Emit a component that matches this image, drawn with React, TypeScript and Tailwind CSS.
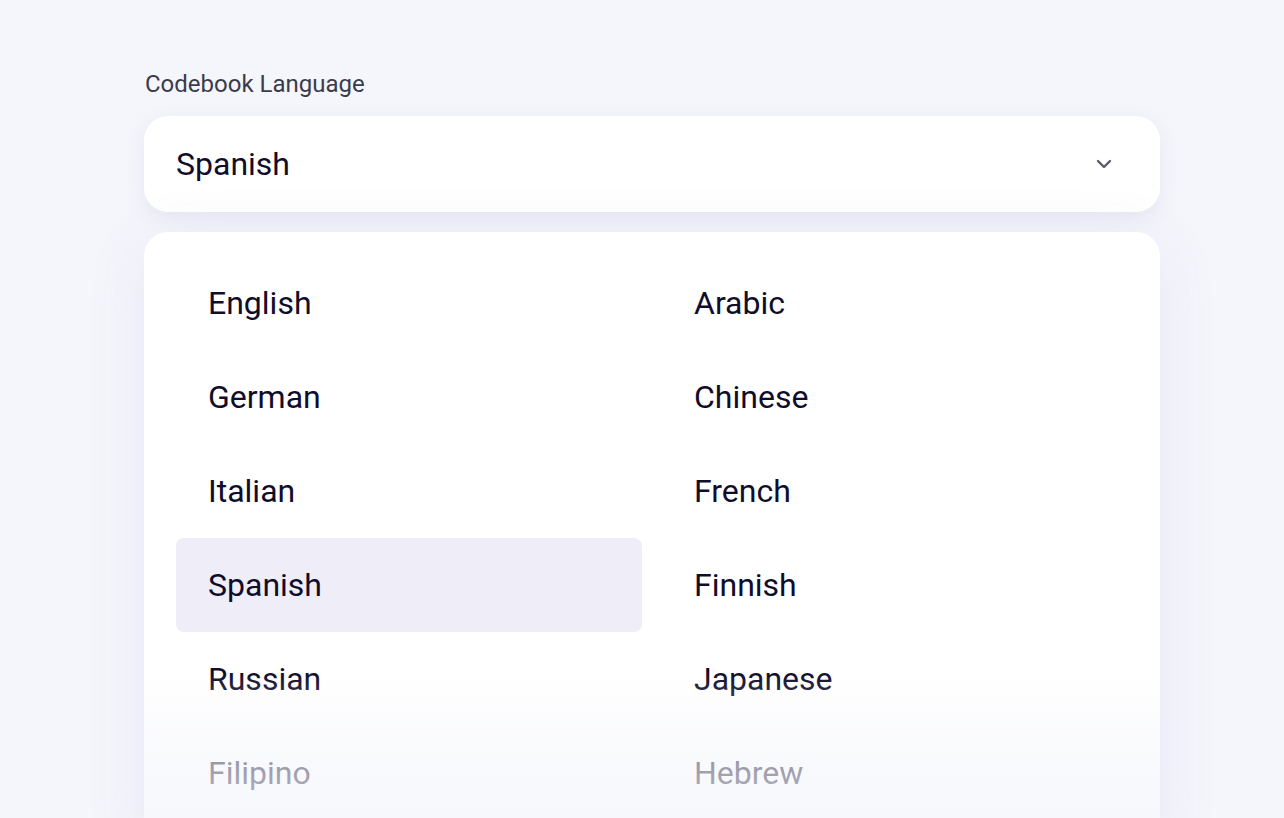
import React from "react";

const left = ["English", "German", "Italian", "Spanish", "Russian", "Filipino"];
const right = ["Arabic", "Chinese", "French", "Finnish", "Japanese", "Hebrew"];

export default function App() {
  const rows = left.map((l, i) => [l, right[i]]);
  return (
    <div
      className="w-[1284px] h-[818px] overflow-hidden bg-[#f5f6fb] text-[#0f0d2b]"
      style={{ fontFamily: "Roboto, 'Noto Sans', sans-serif" }}
    >
      <div className="ml-[144px] w-[1016px] pt-[70px]">
        <div className="pl-[1px] text-[24px] leading-[28px] text-[#3b3b4c]">Codebook Language</div>
        <div className="mt-[18px] h-[96px] rounded-[24px] bg-white shadow-[0_6px_20px_rgba(90,90,170,0.10)] flex items-center justify-between pl-[32px] pr-[48px]">
          <span className="text-[32px]">Spanish</span>
          <svg width="16" height="10" viewBox="0 0 16 10" fill="none">
            <path d="M2 2l6 6 6-6" stroke="#5b5b6b" strokeWidth="2.4" strokeLinecap="round" strokeLinejoin="round" />
          </svg>
        </div>
        <div className="relative mt-[20px] h-[620px] rounded-[24px] bg-white shadow-[0_10px_60px_rgba(100,100,210,0.10)] px-[32px] pt-[24px]">
          <div className="grid grid-cols-2 gap-x-[20px]">
            {rows.map(([l, r]) => (
              <React.Fragment key={l}>
                <div
                  className={
                    "h-[94px] flex items-center pl-[32px] rounded-[8px] text-[32px] " +
                    (l === "Spanish" ? "bg-[#efedf8]" : "")
                  }
                >
                  {l}
                </div>
                <div className="h-[94px] flex items-center pl-[32px] rounded-[8px] text-[32px]">{r}</div>
              </React.Fragment>
            ))}
          </div>
          <div className="absolute left-0 right-0 top-[440px] h-[180px] bg-gradient-to-b from-[rgba(245,246,251,0)] via-[rgba(245,246,251,0.6)] to-[rgba(245,246,251,0.85)]" />
        </div>
      </div>
    </div>
  );
}
